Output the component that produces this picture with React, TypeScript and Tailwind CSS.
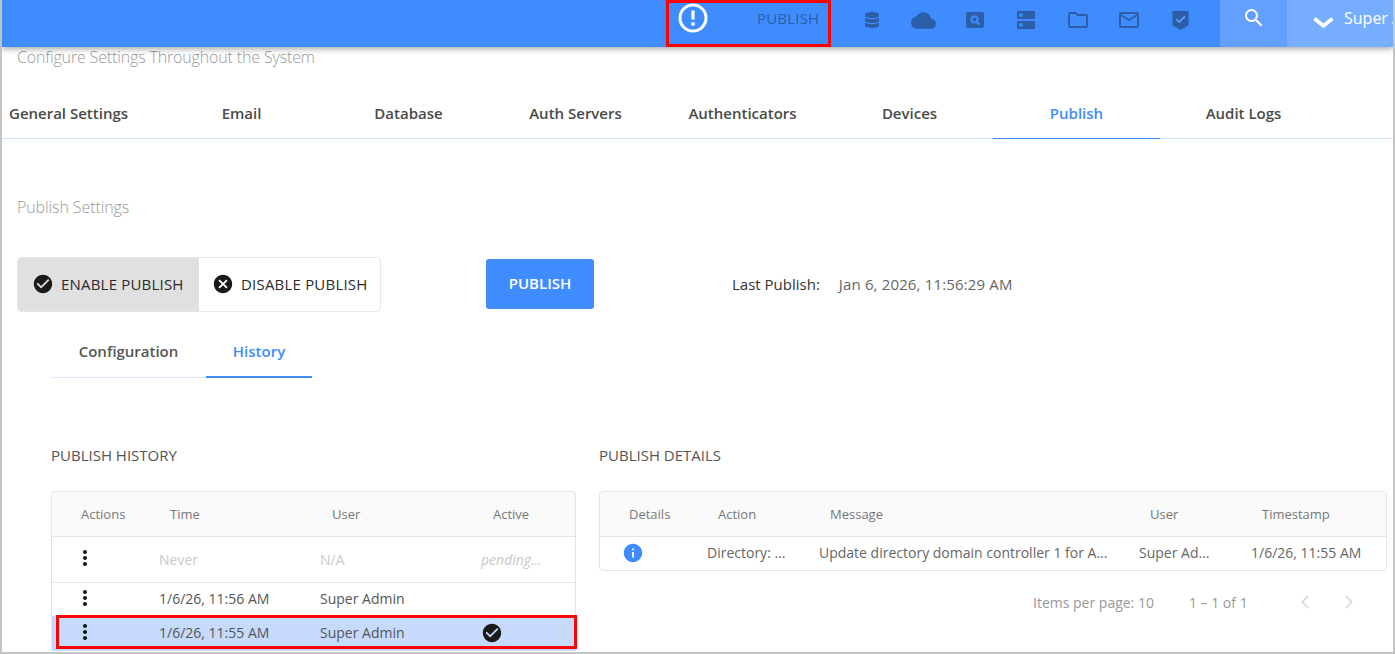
import { ChevronLeft, ChevronRight } from 'lucide-react';
import { FaDatabase } from 'react-icons/fa';
import {
  MdCancel,
  MdCheckCircle,
  MdCloud,
  MdDns,
  MdInfo,
  MdMailOutline,
  MdMoreVert,
  MdOutlineFolder,
  MdSearch,
} from 'react-icons/md';

const mainTabs = ['General Settings', 'Email', 'Database', 'Auth Servers', 'Authenticators', 'Devices', 'Publish', 'Audit Logs'];

function SearchBoxIcon() {
  return (
    <svg viewBox="0 0 20 18" className="h-[18px] w-[20px]">
      <rect x="1" y="1" width="18" height="16" rx="2" fill="currentColor" />
      <circle cx="9.5" cy="8.5" r="3" fill="none" stroke="#3f8cff" strokeWidth="2" />
      <path d="M12 11l2.5 2.5" stroke="#3f8cff" strokeWidth="2" />
    </svg>
  );
}

function ShieldIcon() {
  return (
    <svg viewBox="0 0 18 22" className="h-[21px] w-[17px]">
      <path d="M0.5 1h17v15l-8.5 5l-8.5-5z" fill="currentColor" />
      <path d="M4.5 9.5l3.2 3.2l6-6" fill="none" stroke="#5f9dff" strokeWidth="1.8" />
    </svg>
  );
}

function Header() {
  const icons = [
    <FaDatabase key="db" className="h-[16px] w-[16px]" />,
    <MdCloud key="cloud" className="h-[25px] w-[25px]" />,
    <SearchBoxIcon key="search" />,
    <MdDns key="dns" className="h-[24px] w-[24px]" />,
    <MdOutlineFolder key="folder" className="h-[24px] w-[24px]" />,
    <MdMailOutline key="mail" className="h-[24px] w-[24px]" />,
    <ShieldIcon key="shield" />,
  ];
  return (
    <header className="relative z-10 flex h-[47px] shrink-0 items-stretch justify-end bg-[#3f8cff] pl-[664px] shadow-[0_2px_6px_rgba(0,0,0,0.35)]">
      <div className="relative flex w-[165px] shrink-0 items-start">
        <svg viewBox="0 0 30 30" className="ml-[12px] mt-[3px] h-[30px] w-[30px] text-white">
          <circle cx="15" cy="15" r="13" fill="none" stroke="currentColor" strokeWidth="3" />
          <path d="M15 7.5v9" stroke="currentColor" strokeWidth="3.2" />
          <circle cx="15" cy="21" r="1.9" fill="currentColor" />
        </svg>
        <span className="ml-[49px] mt-[8px] text-[15px] leading-[20px] tracking-[0.2px] text-[#2c5ea8]">PUBLISH</span>
        <div className="absolute inset-0 border-[3px] border-[#ff0000]" />
      </div>
      <div className="flex flex-1 items-center pb-[7px] pl-[15px] text-[#2c5ea8]">
        {icons.map((icon, i) => (
          <span key={i} className="flex h-[26px] w-[51.5px] items-center justify-center">
            {icon}
          </span>
        ))}
      </div>
      <div className="flex w-[67px] shrink-0 items-start justify-center bg-[#639fff] pt-[6px] text-white">
        <MdSearch className="h-[24px] w-[24px]" />
      </div>
      <div className="flex w-[106px] shrink-0 items-start overflow-hidden whitespace-nowrap bg-[#77adff] pl-[26px] pt-[7px] text-[16px] leading-[22px] text-white">
        <svg viewBox="0 0 21 11" className="mr-[10px] mt-[10px] h-[11px] w-[21px] shrink-0">
          <path d="M1.5 1.5l9 7.5l9-7.5" fill="none" stroke="currentColor" strokeWidth="3.6" />
        </svg>
        Super Admin
      </div>
    </header>
  );
}

function MainTabs() {
  return (
    <nav className="mt-[26px] flex h-[46px] shrink-0 items-stretch border-b border-[#cfe2fb] text-[15px] font-semibold text-[#4a4a4a]">
      {mainTabs.map((tab, i) => (
        <div
          key={tab}
          className={
            (i === 0 ? 'w-[156px] justify-start pl-[7px] ' : 'w-[167px] justify-center ') +
            (tab === 'Publish' ? '-mb-px border-b border-[#3f8cff] text-[#3f8cff] ' : '') +
            'flex items-center pb-[4px]'
          }
        >
          {tab}
        </div>
      ))}
    </nav>
  );
}

function PublishControls() {
  return (
    <div className="mt-[40px] flex shrink-0 items-center pl-[15px] pr-[2px]">
      <div className="flex h-[55px] w-[364px] overflow-hidden rounded-[4px] border border-[#e6e6e6] text-[15px] tracking-[0.2px] text-[#2b2b2b]">
        <div className="flex w-[181px] items-center gap-[7px] bg-[#e0e0e0] pb-[1px] pl-[14px]">
          <MdCheckCircle className="h-[22px] w-[22px] text-[#1a1a1a]" />
          ENABLE PUBLISH
        </div>
        <div className="flex flex-1 items-center gap-[7px] pb-[1px] pl-[13px]">
          <MdCancel className="h-[22px] w-[22px] text-[#1a1a1a]" />
          DISABLE PUBLISH
        </div>
      </div>
      <button
        type="button"
        className="mb-[2px] ml-[105px] h-[50px] w-[108px] rounded-[3px] bg-[#3f8cff] text-[15px] font-semibold text-white"
      >
        PUBLISH
      </button>
      <span className="ml-[138px] text-[15px] text-[#333333]">Last Publish:</span>
      <span className="ml-[19px] text-[15px] tracking-[0.15px] text-[#666666]">Jan 6, 2026, 11:56:29 AM</span>
    </div>
  );
}

function SubTabs() {
  return (
    <div className="ml-[49px] mt-[14px] flex h-[52px] w-[261px] shrink-0 border-b border-[#dbe8fb] text-[15px] font-semibold">
      <div className="flex w-[155px] items-center justify-center pb-[1px] text-[#555555]">Configuration</div>
      <div className="-mb-px flex w-[106px] items-center justify-center border-b-2 border-[#3f8cff] text-[#3f8cff]">
        History
      </div>
    </div>
  );
}

const leftCols = 'grid grid-cols-[107px_161px_161px_1fr] items-center';
const rightCols = 'grid grid-cols-[107px_112px_320px_112px_1fr] items-center';

function HistoryTable() {
  return (
    <div className="rounded-t-[4px] border border-b-0 border-[#e4e4e4] text-[14px]">
      <div className={leftCols + ' h-[45px] rounded-t-[4px] border-b border-[#e4e4e4] bg-[#fafafa] pt-[2px] text-[13px] text-[#777777]'}>
        <span className="pl-[29px]">Actions</span>
        <span className="pl-[11px]">Time</span>
        <span className="pl-[12px]">User</span>
        <span className="pl-[12px]">Active</span>
      </div>
      <div className={leftCols + ' h-[46px] border-b border-[#e4e4e4] text-[#c9c9c9]'}>
        <MdMoreVert className="mb-[3px] ml-[21px] h-[24px] w-[24px] text-[#111111]" />
        <span>Never</span>
        <span>N/A</span>
        <span className="italic">pending...</span>
      </div>
      <div className={leftCols + ' h-[33px] text-[#555555]'}>
        <MdMoreVert className="mb-[3px] ml-[21px] h-[24px] w-[24px] text-[#111111]" />
        <span className="pb-[3px]">1/6/26, 11:56 AM</span>
        <span className="pb-[3px]">Super Admin</span>
        <span />
      </div>
      <div className={leftCols + ' relative h-[35px] bg-[#c5dafc] text-[#555555]'}>
        <MdMoreVert className="mb-[3px] ml-[21px] h-[24px] w-[24px] text-[#111111]" />
        <span className="pb-[3px]">1/6/26, 11:55 AM</span>
        <span className="pb-[3px]">Super Admin</span>
        <MdCheckCircle className="mb-[1px] h-[22px] w-[22px] text-[#1a1a1a]" />
        <div className="absolute -top-px bottom-[2px] left-[4px] right-[-2px] border-[3px] border-[#ff0000]" />
      </div>
    </div>
  );
}

function DetailsTable() {
  return (
    <div className="w-[788px] rounded-[4px] border border-[#e4e4e4] text-[14px]">
      <div className={rightCols + ' h-[45px] rounded-t-[4px] border-b border-[#e4e4e4] bg-[#fafafa] pt-[2px] text-[13px] text-[#777777]'}>
        <span className="pl-[29px]">Details</span>
        <span className="pl-[11px]">Action</span>
        <span className="pl-[11px]">Message</span>
        <span className="pl-[11px]">User</span>
        <span className="pl-[11px]">Timestamp</span>
      </div>
      <div className={rightCols + ' h-[33px] pb-[3px] text-[#666666]'}>
        <MdInfo className="ml-[22px] mt-[1px] h-[22px] w-[22px] text-[#3f8cff]" />
        <span>Directory: ...</span>
        <span className="truncate pr-[10px]">Update directory domain controller 1 for A...</span>
        <span>Super Ad...</span>
        <span>1/6/26, 11:55 AM</span>
      </div>
    </div>
  );
}

export default function App() {
  return (
    <div
      className="flex h-[654px] w-[1395px] flex-col overflow-hidden border-b-2 border-l-2 border-r-2 border-[#c4c4c4] bg-white"
      style={{ fontFamily: '"Open Sans", sans-serif' }}
    >
      <Header />
      <p className="shrink-0 pl-[15px] text-[16px] leading-[20px] tracking-[-0.15px] font-light text-[#999999]">
        Configure Settings Throughout the System
      </p>
      <MainTabs />
      <p className="mt-[58px] shrink-0 pl-[15px] text-[16px] leading-[20px] tracking-[-0.1px] font-light text-[#999999]">Publish Settings</p>
      <PublishControls />
      <SubTabs />
      <div className="mt-[67px] flex shrink-0 pl-[49px]">
        <div className="w-[525px] shrink-0">
          <h3 className="text-[15px] leading-[20px] text-[#555555]">PUBLISH HISTORY</h3>
          <div className="mt-[26px]">
            <HistoryTable />
          </div>
        </div>
        <div className="ml-[23px] shrink-0">
          <h3 className="text-[15px] leading-[20px] text-[#555555]">PUBLISH DETAILS</h3>
          <div className="mt-[26px]">
            <DetailsTable />
          </div>
          <div className="mt-[20px] flex items-center pl-[434px] text-[14px] text-[#999999]">
            <span>Items per page: 10</span>
            <span className="ml-[35px]">1 – 1 of 1</span>
            <ChevronLeft className="ml-[46px] h-[22px] w-[22px] text-[#dddddd]" />
            <ChevronRight className="ml-[22px] h-[22px] w-[22px] text-[#dddddd]" />
          </div>
        </div>
      </div>
    </div>
  );
}
